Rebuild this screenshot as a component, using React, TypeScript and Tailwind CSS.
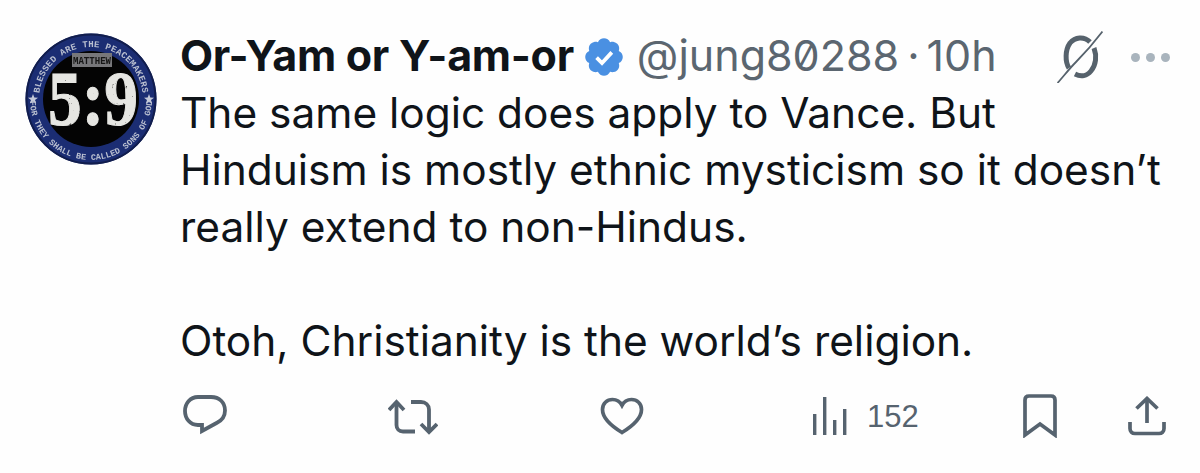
const Avatar = () => (
  <svg viewBox="0 0 132 132" className="w-[132px] h-[132px] shrink-0">
    <defs>
      <path id="topArc" d="M 14 66 A 52 52 0 0 1 118 66" />
      <path id="bottomArc" d="M 5 66 A 61 61 0 0 0 127 66" />
      <filter id="worn" x="0" y="0" width="100%" height="100%">
        <feTurbulence type="fractalNoise" baseFrequency="0.3" numOctaves="2" seed="4" result="noise" />
        <feColorMatrix in="noise" type="matrix" values="0 0 0 0 0  0 0 0 0 0  0 0 0 0 0  0 0 0 -6 5.400" result="mask" />
        <feComposite in="SourceGraphic" in2="mask" operator="in" />
        <feGaussianBlur stdDeviation="0.4" />
      </filter>
      <filter id="soft">
        <feGaussianBlur stdDeviation="0.3" />
      </filter>
    </defs>
    <circle cx="66" cy="66" r="65.500" fill="#1b2d73" />
    <circle cx="66" cy="66" r="64.500" fill="none" stroke="#111d4d" strokeWidth="2" />
    <circle cx="66" cy="66" r="48" fill="#040404" />
    <g filter="url(#soft)">
      <text fontFamily="'Liberation Mono', monospace" fontSize="9" fontWeight="700" fill="#b9bfd0" letterSpacing="0.2">
        <textPath href="#topArc" startOffset="50%" textAnchor="middle">BLESSED ARE THE PEACEMAKERS</textPath>
      </text>
      <text fontFamily="'Liberation Mono', monospace" fontSize="8.500" fontWeight="700" fill="#b9bfd0" letterSpacing="0.1">
        <textPath href="#bottomArc" startOffset="50%" textAnchor="middle">FOR THEY SHALL BE CALLED SONS OF GOD</textPath>
      </text>
      <polygon fill="#c4c9d8" points="8,61 9.300,64.500 13,64.700 10,67 11.100,70.500 8,68.500 4.900,70.500 6,67 3,64.700 6.700,64.500" />
      <polygon fill="#c4c9d8" points="124,61 125.300,64.500 129,64.700 126,67 127.100,70.500 124,68.500 120.900,70.500 122,67 119,64.700 122.700,64.500" />
      <rect x="47" y="20" width="40" height="14" fill="#77777a" />
      <text x="67" y="31" textAnchor="middle" fontFamily="'Liberation Mono', monospace" fontSize="11" fontWeight="700" fill="#151515" textLength="38" lengthAdjust="spacingAndGlyphs">MATTHEW</text>
    </g>
    <text x="68" y="92" textAnchor="middle" fontFamily="'Liberation Serif', serif" fontSize="78" fontWeight="700" fill="#e6e6e2" stroke="#e6e6e2" strokeWidth="1" textLength="90" lengthAdjust="spacingAndGlyphs" filter="url(#worn)">5:9</text>
  </svg>
);

const VerifiedBadge = () => (
  <svg viewBox="1.500 1.500 19 19" className="w-[38px] h-[38px] shrink-0">
    <path
      fill="#4a90e2"
      d="M20.396 11c-.018-.646-.215-1.275-.57-1.816-.354-.54-.852-.972-1.438-1.246.223-.607.27-1.264.14-1.897-.131-.634-.437-1.218-.882-1.687-.47-.445-1.053-.75-1.687-.882-.633-.13-1.29-.083-1.897.14-.273-.587-.704-1.086-1.245-1.44S11.647 1.62 11 1.604c-.646.017-1.273.213-1.813.568s-.969.854-1.24 1.44c-.608-.223-1.267-.272-1.902-.14-.635.13-1.22.436-1.69.882-.445.47-.749 1.055-.878 1.688-.13.633-.08 1.29.144 1.896-.587.274-1.087.705-1.443 1.245-.356.54-.555 1.17-.574 1.817.02.647.218 1.276.574 1.817.356.54.856.972 1.443 1.245-.224.606-.274 1.263-.144 1.896.13.634.433 1.218.877 1.688.47.443 1.054.747 1.687.878.633.132 1.29.084 1.897-.136.274.586.705 1.084 1.246 1.439.54.354 1.17.551 1.816.569.647-.016 1.276-.213 1.817-.567s.972-.854 1.245-1.44c.604.239 1.266.296 1.903.164.636-.132 1.22-.447 1.68-.907.46-.46.776-1.044.908-1.681s.075-1.299-.165-1.903c.586-.274 1.084-.705 1.439-1.246.354-.54.551-1.17.569-1.816z"
    />
    <path fill="none" stroke="#fff" strokeWidth="1.900" d="M7.300 11.300l2.700 2.700 4.900-5.300" />
  </svg>
);

const GrokIcon = () => (
  <svg viewBox="0 0 46 52" className="w-[46px] h-[52px]" fill="none" stroke="#56626c">
    <path strokeWidth="5" d="M33 11C27 5 18 6 13 12 8 19 8 31 12 37" />
    <path strokeWidth="5" d="M37 17c3 8 2 17-3 23-4 5-10 6-16 3" />
    <path strokeWidth="1.800" d="M45.500 0.500C36 13 26 24 19 31 12 38 6 46 0.500 52" />
  </svg>
);

const Reply = () => (
  <svg viewBox="0 0 44 42" className="w-[44px] h-[42px]" fill="none" stroke="#56636f" strokeWidth="3.800">
    <path d="M15 2h13c8.500 0 14 5.500 14 13.500 0 6-3.500 10-8 12.300L19 36v-6h-4C7 30 2 23.500 2 16S7 2 15 2z" />
  </svg>
);

const Retweet = () => (
  <svg viewBox="0 0 50 37" className="w-[50px] h-[37px]" fill="none" stroke="#56636f" strokeWidth="3.800">
    <path d="M1 12l7.500-8 7.500 8" />
    <path d="M8.500 5v22c0 4 2.500 6.500 6.500 6.500h12" />
    <path d="M23 4h10c4.500 0 8 3 8 7.500V33" />
    <path d="M33 26l8 8 8-8" />
  </svg>
);

const Heart = () => (
  <svg viewBox="0 0 44 38" className="w-[44px] h-[38px]" fill="none" stroke="#56636f" strokeWidth="3.700">
    <path d="M22 35.500C13 30 2.500 22 2.500 12.500 2.500 6.500 7 2.500 12.500 2.500c4 0 7.500 2 9.500 5.800 2-3.800 5.500-5.800 9.500-5.800C37 2.500 41.500 6.500 41.500 12.500 41.500 22 31 30 22 35.500z" />
  </svg>
);

const Views = () => (
  <svg viewBox="0 0 34 38" className="w-[34px] h-[38px]" fill="#56636f">
    <rect x="0" y="17" width="3.400" height="21" />
    <rect x="10" y="0" width="3.400" height="38" />
    <rect x="20" y="23" width="3.400" height="15" />
    <rect x="30" y="12" width="3.400" height="26" />
  </svg>
);

const Bookmark = () => (
  <svg viewBox="0 0 34 44" className="w-[34px] h-[44px]" fill="none" stroke="#56636f" strokeWidth="3.700">
    <path d="M2 41V6c0-2.500 1.500-4 4-4h22c2.500 0 4 1.500 4 4v35L17 30z" />
  </svg>
);

const Share = () => (
  <svg viewBox="0 0 38 40" className="w-[38px] h-[40px]" fill="none" stroke="#56636f" strokeWidth="3.700">
    <path d="M19 27V3" />
    <path d="M8.500 12.500L19 2.500l10.500 10" />
    <path d="M2 26v6.500c0 3 2 5 5 5h24c3 0 5-2 5-5V26" />
  </svg>
);

export default function App() {
  return (
    <div
      className="w-[1200px] h-[473px] overflow-hidden bg-[#fefefe] flex pl-[25px] pt-[33px] text-[#0f1419]"
      style={{ fontFamily: "Inter, 'Liberation Sans', sans-serif" }}
    >
      <div className="w-[155px] shrink-0">
        <Avatar />
      </div>
      <div className="w-[1000px] pt-[2px]">
        {/* Header */}
        <div className="flex items-center h-[40px]">
          <span className="text-[43px] leading-[40px] font-bold tracking-[-0.3px] whitespace-nowrap">Or-Yam or Y-am-or</span>
          <span className="ml-[11px] mt-[3px]">
            <VerifiedBadge />
          </span>
          <span className="ml-[14px] text-[43px] leading-[40px] text-[#5b6670] slashed-zero whitespace-nowrap">@jung80288</span>
          <span className="ml-[8px] text-[43px] leading-[40px] text-[#5b6670]">·</span>
          <span className="ml-[7px] text-[43px] leading-[40px] text-[#5b6670] whitespace-nowrap">10h</span>
          <span className="ml-[60px] mt-[4px]">
            <GrokIcon />
          </span>
          <span className="ml-[28px] mt-[4px] flex gap-[6px]">
            <span className="w-[9px] h-[9px] rounded-full bg-[#a9b4bd]" />
            <span className="w-[9px] h-[9px] rounded-full bg-[#a9b4bd]" />
            <span className="w-[9px] h-[9px] rounded-full bg-[#a9b4bd]" />
          </span>
        </div>

        {/* Body */}
        <div className="mt-[9px] text-[42.4px] leading-[57px] whitespace-nowrap">
          <p>The same logic does apply to Vance. But</p>
          <p>Hinduism is mostly ethnic mysticism so it doesn’t</p>
          <p>really extend to non-Hindus.</p>
          <p className="mt-[57px]">Otoh, Christianity is the world’s religion.</p>
        </div>

        {/* Actions */}
        <div className="mt-[25px] flex items-center h-[44px] text-[#56636f]">
          <span className="ml-[3px]"><Reply /></span>
          <span className="ml-[161px]"><Retweet /></span>
          <span className="ml-[162px]"><Heart /></span>
          <span className="ml-[169px]"><Views /></span>
          <span className="ml-[20px] text-[31px] leading-none" style={{ fontFamily: "'Liberation Sans', sans-serif" }}>152</span>
          <span className="ml-[104px]"><Bookmark /></span>
          <span className="ml-[71px]"><Share /></span>
        </div>
      </div>
    </div>
  );
}
